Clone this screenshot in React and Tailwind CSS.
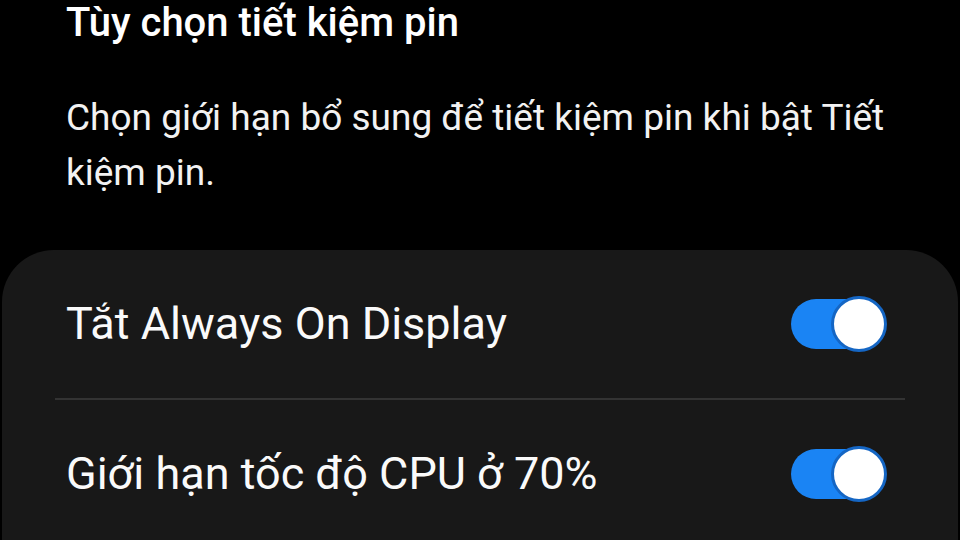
const rows = [
  { label: "Tắt Always On Display", on: true },
  { label: "Giới hạn tốc độ CPU ở 70%", on: true },
];

function Toggle({ on }) {
  return (
    <div className="relative h-[56px] w-[96px] flex items-center">
      <div
        className={
          "h-[50px] w-[84px] rounded-full " + (on ? "bg-[#1a84f4]" : "bg-[#555]")
        }
      />
      <div className="absolute right-0 top-0 h-[56px] w-[56px] rounded-full bg-white border-[3px] border-[#1566c4]" />
    </div>
  );
}

export default function App() {
  return (
    <div
      className="w-[960px] h-[540px] bg-black overflow-hidden text-white"
      style={{ fontFamily: "Roboto, 'Noto Sans', sans-serif" }}
    >
      {/* page header */}
      <div className="px-[66px]">
        <h1 className="text-[40px] leading-[46px] font-medium">
          Tùy chọn tiết kiệm pin
        </h1>
        <p className="mt-[44px] text-[37px] leading-[55px] text-[#f2f2f2]">
          Chọn giới hạn bổ sung để tiết kiệm pin khi bật Tiết kiệm pin.
        </p>
      </div>

      {/* options card */}
      <div className="mt-[50px] mx-[2px] bg-[#181818] rounded-t-[52px]">
        {rows.map((row, i) => (
          <div key={row.label}>
            {i > 0 && <div className="mx-[53px] h-[2px] bg-[#333333]" />}
            <div className="h-[148px] pl-[64px] pr-[71px] flex items-center justify-between">
              <span className="text-[45px] text-[#fafafa]">{row.label}</span>
              <Toggle on={row.on} />
            </div>
          </div>
        ))}
      </div>
    </div>
  );
}
